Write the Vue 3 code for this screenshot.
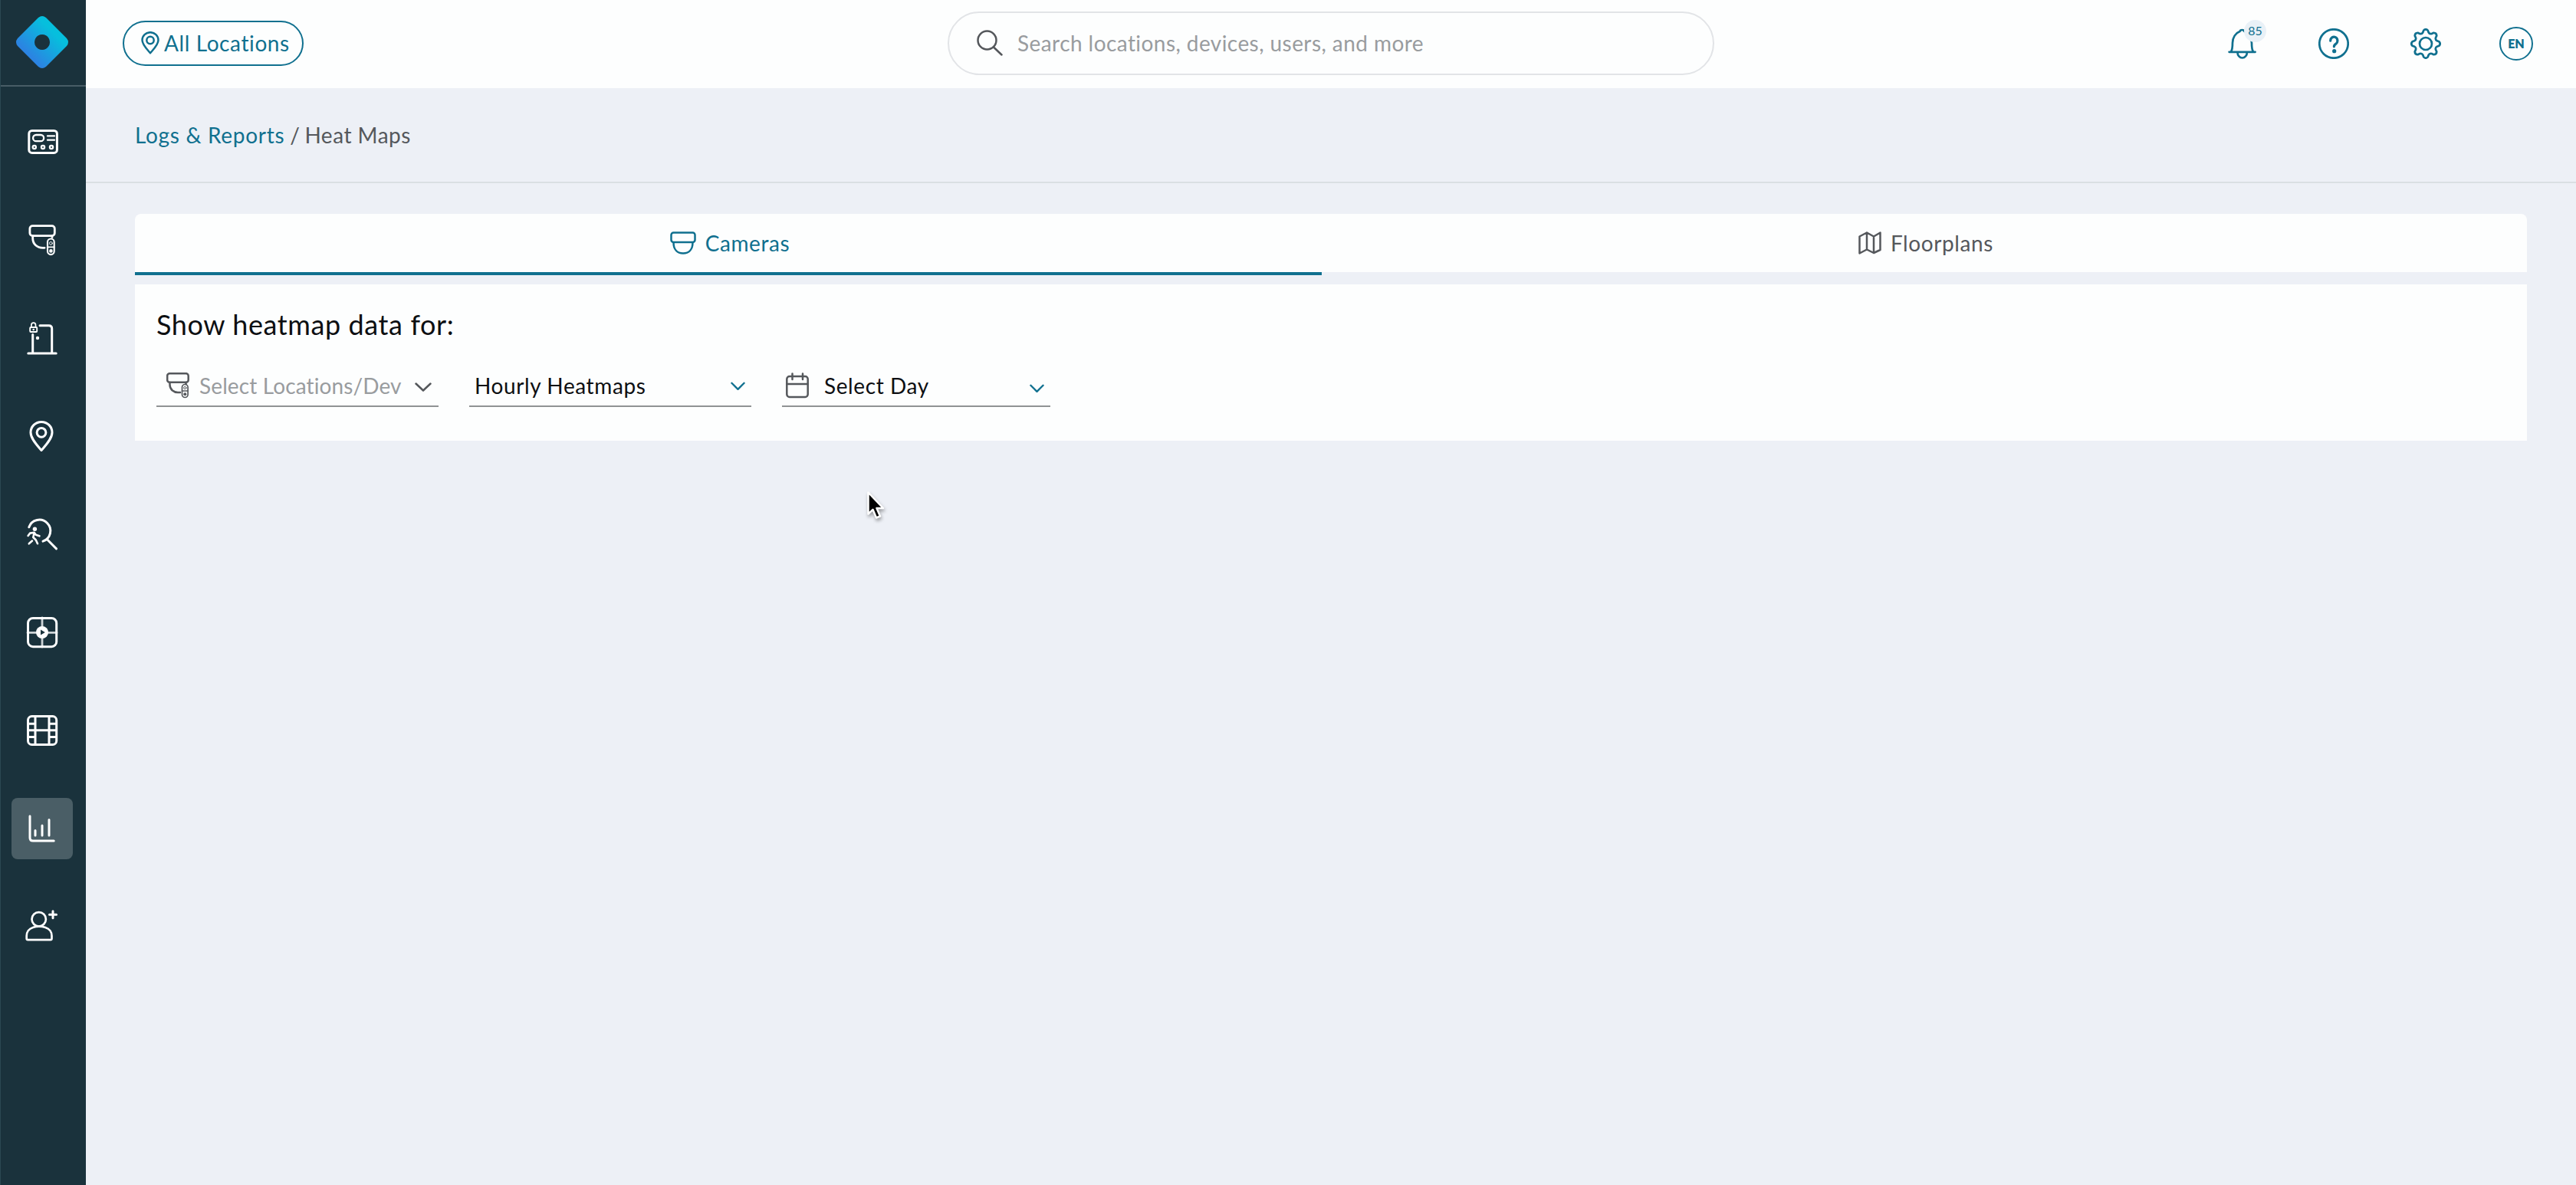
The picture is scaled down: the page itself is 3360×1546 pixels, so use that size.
<template>
  <div class="app">
    <aside class="sidebar">
      <div class="brand">
        <svg class="logo" viewBox="0 0 68 68">
          <defs>
            <linearGradient id="brand-fill" x1="0.1" y1="0.9" x2="0.9" y2="0.1">
              <stop offset="0.2" stop-color="#2b84e2" />
              <stop offset="0.75" stop-color="#06bfdd" />
            </linearGradient>
          </defs>
          <path
            fill="url(#brand-fill)"
            fill-rule="evenodd"
            d="M29 2 Q34 -2 39 2 L66 29 Q70 34 66 39 L39 66 Q34 70 29 66 L2 39 Q-2 34 2 29 Z M34 24 a10 10 0 1 0 0.01 0 Z"
          />
        </svg>
      </div>

      <nav class="menu">
        <a v-for="item in menu" :key="item" class="tile" :class="{ active: item === current }">
          <svg v-if="item === 'dashboard'" viewBox="0 0 80 80">
            <rect x="22.8" y="25.4" width="36.6" height="29" rx="4" />
            <g stroke-width="2.3">
              <rect x="28.1" y="31" width="14" height="8.2" rx="4" />
              <path d="M47 32.4h9M47 37.7h9" />
              <circle cx="29.8" cy="47" r="2.1" />
              <circle cx="41" cy="47" r="2.1" />
              <circle cx="52" cy="47" r="2.1" />
            </g>
          </svg>
          <svg v-else-if="item === 'devices'" viewBox="0 0 80 80">
            <g stroke-width="2.8">
              <rect x="23.9" y="21.6" width="32.4" height="13" rx="3.6" />
              <path d="M27.7 35v3c0 7.5 6 12.3 13 12.3h2.400M53 35v1.5" />
            </g>
            <rect x="47" y="38.5" width="8.7" height="20.600" rx="4.3" stroke-width="2.1" />
            <path d="M47 49.3h8.7" stroke-width="1.8" />
            <circle cx="51.4" cy="44.4" r="1.9" stroke-width="1" />
            <circle cx="51.4" cy="54.4" r="2.3" fill="currentColor" stroke="none" />
          </svg>
          <svg v-else-if="item === 'doors'" viewBox="0 0 80 80">
            <path d="M21.8 60h36.4M27.7 35.5V60M37 23.7h11.7q4 0 4 4V60" />
            <rect x="24.2" y="26" width="9" height="6" rx="1" stroke-width="1.9" />
            <path d="M25.9 26v-3a2.8 2.8 0 0 1 5.6 0v3" stroke-width="1.7" />
            <circle cx="28.7" cy="29" r="1.3" fill="currentColor" stroke="none" />
            <circle cx="34" cy="40" r="2.2" fill="currentColor" stroke="none" />
          </svg>
          <svg v-else-if="item === 'places'" viewBox="0 0 80 80">
            <path d="M39 58.5C33 51.5 25 43 25 35.2a14 13.8 0 0 1 28 0C53 43 45 51.5 39 58.5z" />
            <circle cx="39" cy="35.3" r="5.9" />
          </svg>
          <svg v-else-if="item === 'search'" viewBox="0 0 80 80">
            <path d="M22.8 30.8A14.4 14.4 0 1 1 41 49.2M46 46.3L58.5 58.9" />
            <circle cx="30.4" cy="33.2" r="2.7" fill="currentColor" stroke="none" />
            <path d="M21.6 42l2.6-3.4 5.4-.8 2.2 3 4.6 1.5M29.6 38.5l-1.3 5.5 3.5 3.5 2.2 4.7M27 48.6l-4.200 3.7" stroke-width="2.6" />
          </svg>
          <svg v-else-if="item === 'live'" viewBox="0 0 80 80">
            <path d="M40 21v38M21 40.4h38" stroke-width="2.8" stroke="#cdd3d6" />
            <rect x="21.5" y="21.5" width="37.2" height="37.2" rx="6.5" />
            <circle cx="40" cy="40" r="8" fill="currentColor" stroke="none" />
            <path d="M38 36.500v7l5.8-3.500z" fill="#1a323c" stroke="none" />
          </svg>
          <svg v-else-if="item === 'archive'" viewBox="0 0 80 80">
            <rect x="21.5" y="21.5" width="37.2" height="37" rx="5" />
            <path d="M31 22v36M49 22v36M31 39.8h18M22 31.2h8.5M22 39.8h8.5M22 48.5h8.5M49.5 31.2H58M49.5 39.8H58M49.5 48.5H58" />
          </svg>
          <svg v-else-if="item === 'reports'" viewBox="0 0 80 80">
            <path d="M24 23.7V52q0 4 4 4h27.2M31 42.5v6.500M40 35.9v13.100M49 28.5v20.500" />
          </svg>
          <svg v-else viewBox="0 0 80 80">
            <circle cx="35.7" cy="30.3" r="9.2" stroke-width="2.7" />
            <path d="M28 41c-5.5 1.7-8.3 6.300-8.300 11v3.6q0 1.6 1.6 1.6h29.600q1.6 0 1.6-1.6V52c0-4.700-2.8-9.300-8.300-11-5-1.6-11.5-1.6-16.200 0z" stroke-width="2.7" />
            <path d="M54 19.8v9M49.5 24.3h9" />
          </svg>
        </a>
      </nav>
    </aside>

    <div class="page">
      <header class="topbar">
        <button class="location-btn">
          <svg class="pin" viewBox="0 0 24 30">
            <path d="M12 28.2C8 23.5 1.5 17.5 1.5 11.3a10.5 10.1 0 0 1 21 0C22.5 17.5 16 23.5 12 28.2z" />
            <circle cx="12" cy="11.5" r="4.7" />
          </svg>
          <span>All Locations</span>
        </button>

        <div class="search">
          <svg class="search-icon" viewBox="0 0 34 34">
            <circle cx="13.5" cy="13.5" r="12" />
            <path d="M22 22.5l10.500 10" />
          </svg>
          <span>Search locations, devices, users, and more</span>
        </div>

        <div class="actions">
          <div class="bell">
            <svg viewBox="0 0 40 40">
              <path d="M1.6 30.8h34M4 30.500c2-3 2-6.500 2-11.500 0-7 4-13 9.500-15l1-1.500q2-1 4 0l1 1.500c5.500 2 9.500 8 9.500 15 0 5 0 8.500 2 11.500M12.500 31.500a6.200 7 0 0 0 12.400 0" />
            </svg>
            <span class="badge">85</span>
          </div>
          <svg class="help" viewBox="0 0 40 40">
            <circle cx="20" cy="20" r="18.7" />
            <path d="M15.7 16.2a4.6 5 0 1 1 7.3 3.9q-2.6 1.6-2.6 3.7" stroke-width="3.2" />
            <circle cx="20.7" cy="29.7" r="2.6" fill="currentColor" stroke="none" />
          </svg>
          <svg class="gear" viewBox="0 0 40 40">
            <path :d="gearPath" />
            <circle cx="20" cy="20" r="8" />
          </svg>
          <div class="lang">EN</div>
        </div>
      </header>

      <div class="breadcrumb">
        <a>Logs &amp; Reports</a><span class="sep">/</span><span>Heat Maps</span>
      </div>

      <main class="content">
        <div class="tabs">
          <div class="tab selected">
            <svg class="tab-icon" viewBox="0 0 34 30">
              <rect x="1.5" y="1.5" width="31" height="12.5" rx="3" />
              <path d="M4.5 14.5c0 9 5 14 12.5 14s12.5-5 12.5-14" />
            </svg>
            <span>Cameras</span>
          </div>
          <div class="tab plans">
            <svg class="tab-icon map" viewBox="0 0 30 30">
              <path d="M1.5 6.5L11 1.5l9 5 8.500-5v22.500L20 28l-9-4.500-9.500 5zM11 1.5v22M20 6.5V28" />
            </svg>
            <span>Floorplans</span>
          </div>
        </div>

        <section class="panel">
          <h2>Show heatmap data for:</h2>
          <div class="filters">
            <div class="select devices">
              <svg class="device-icon" viewBox="0 0 30 34">
                <rect x="1.2" y="1.2" width="27.5" height="11.5" rx="3" />
                <path d="M4.5 13v3c0 6 5 10 10.5 10H18M25.5 13v2" />
                <rect x="20.5" y="15.5" width="7.6" height="17" rx="3.8" stroke-width="1.7" />
                <path d="M20.5 24h7.6" stroke-width="1.5" />
                <circle cx="24.3" cy="20" r="1.6" stroke-width="1" />
                <circle cx="24.3" cy="28.3" r="2" fill="currentColor" stroke="none" />
              </svg>
              <span class="value">Select Locations/Dev</span>
              <svg class="chevron" viewBox="0 0 22 12"><path d="M1.5 1.5L11 10.5l9.500-9" /></svg>
            </div>
            <div class="select range">
              <span class="value">Hourly Heatmaps</span>
              <svg class="chevron" viewBox="0 0 20 12"><path d="M1.5 1.5L10 10l8.500-8.500" /></svg>
            </div>
            <div class="select day">
              <svg class="calendar" viewBox="0 0 30 34">
                <rect x="1.3" y="5" width="27.4" height="27" rx="3.5" />
                <path d="M1.3 15h27.400M8.5 1.5v7.500M22 1.5v7.500" />
              </svg>
              <span class="value">Select Day</span>
              <svg class="chevron" viewBox="0 0 20 12"><path d="M1.5 1.5L10 10l8.500-8.500" /></svg>
            </div>
          </div>
        </section>
      </main>
    </div>

    <svg class="cursor" viewBox="0 0 24 38">
      <path d="M2.5 2.5v28l6-5.7 4.5 10.7 5-2-4.500-10.500h8.500z" />
    </svg>
  </div>
</template>

<script setup>
const menu = ['dashboard', 'devices', 'doors', 'places', 'search', 'live', 'archive', 'reports', 'users']
const current = 'reports'

// eight rounded teeth around the centre of a 40x40 box
const point = (r, deg) => {
  const a = (deg * Math.PI) / 180
  return `${(20 + r * Math.cos(a)).toFixed(2)} ${(20 + r * Math.sin(a)).toFixed(2)}`
}
const gearPath =
  Array.from({ length: 8 }, (_, i) => {
    const d = i * 45
    return `${i ? 'L' : 'M'}${point(15.2, d - 14)} L${point(17.6, d - 9)} Q${point(20, d)} ${point(17.6, d + 9)} L${point(15.2, d + 14)} Q${point(13.2, d + 22.5)} ${point(15.2, d + 31)}`
  }).join(' ') + 'Z'
</script>

<style>
body {
  background: #edf0f6;
}
</style>

<style scoped>
.app {
  display: flex;
  height: 1546px;
  background: #edf0f6;
  color: #55585c;
  font-family: Lato, 'Noto Sans', sans-serif;
  font-size: 28px;
  line-height: 34px;
  letter-spacing: 0.6px;
  white-space: nowrap;
  overflow: hidden;
}
svg {
  display: block;
  flex: none;
  fill: none;
  stroke: currentColor;
  stroke-width: 2.5;
  stroke-linecap: round;
  stroke-linejoin: round;
}

.sidebar {
  flex: none;
  box-sizing: border-box;
  width: 112px;
  border-left: 1px solid #2b4852;
  background: #1a323c;
  color: #fff;
}
.brand {
  box-sizing: border-box;
  height: 113px;
  padding: 21px 0 0 20px;
  border-bottom: 2px solid #485d66;
}
.logo { width: 68px; height: 68px; stroke: none; }
.menu {
  display: flex;
  flex-direction: column;
  gap: 48px;
  padding: 32px 0 0 14px;
}
.tile { width: 80px; height: 80px; border-radius: 8px; }
.tile.active { background: #4a5e66; }
.tile svg { width: 80px; height: 80px; stroke-width: 3; }

.page { flex: 1; min-width: 0; }
.topbar {
  box-sizing: border-box;
  display: flex;
  align-items: center;
  height: 115px;
  padding: 0 56px 2px 48px;
  background: #fdfefe;
}
.location-btn {
  box-sizing: border-box;
  display: flex;
  gap: 6px;
  width: 236px;
  height: 59px;
  padding: 10px 0 0 22px;
  border: 2px solid #10708f;
  border-radius: 30px;
  background: none;
  color: #10708f;
  font: inherit;
  letter-spacing: inherit;
}
.pin { width: 24px; height: 30px; margin-top: 2px; }
.search {
  box-sizing: border-box;
  display: flex;
  align-items: center;
  gap: 19px;
  width: 1000px;
  height: 83px;
  margin-left: 840px;
  padding: 0 0 2px 36px;
  border: 2px solid #e2e4e7;
  border-radius: 42px;
  color: #999c9f;
  letter-spacing: 0.43px;
}
.search-icon { width: 34px; height: 34px; color: #54575b; }
.actions {
  display: flex;
  align-items: center;
  margin-left: auto;
  color: #10708f;
}
.actions svg { width: 40px; height: 40px; stroke-width: 2.7; }
.bell { position: relative; margin-right: 78px; }
.badge {
  position: absolute;
  top: -11px;
  left: 21px;
  width: 29px;
  height: 29px;
  border-radius: 50%;
  background: #e9f1f7;
  font-size: 16px;
  line-height: 28px;
  letter-spacing: 0;
  text-align: center;
}
.actions .help { margin-right: 80px; }
.actions .gear { margin-right: 76px; }
.lang {
  box-sizing: border-box;
  width: 44px;
  height: 44px;
  border: 2.5px solid #10708f;
  border-radius: 50%;
  font-size: 16px;
  font-weight: 800;
  line-height: 40px;
  letter-spacing: 0;
  text-align: center;
}

.breadcrumb {
  box-sizing: border-box;
  display: flex;
  height: 124px;
  padding: 44px 64px 0;
  border-bottom: 2px solid #dadfe3;
  letter-spacing: 0.5px;
}
.breadcrumb a { color: #10708f; letter-spacing: 0.7px; }
.sep { margin: 0 6px 0 7px; }

.content { padding: 40px 64px 0; }
.tabs { display: flex; height: 80px; }
.tab {
  box-sizing: border-box;
  display: flex;
  justify-content: center;
  gap: 12px;
  width: 1548px;
  height: 76px;
  padding-top: 21px;
  padding-left: 4px;
  border-radius: 8px 0 0 0;
  background: #fdfefe;
}
.tab.selected {
  height: 80px;
  border-bottom: 4px solid #10708f;
  color: #10708f;
}
.tab.plans { flex: 1; border-radius: 0 8px 0 0; }
.tab-icon { width: 34px; height: 30px; margin-top: 2px; }
.tab-icon.map { width: 30px; }

.panel {
  box-sizing: border-box;
  height: 204px;
  margin-top: 12px;
  padding: 30px 28px 0;
  background: #fdfefe;
}
h2 {
  margin: 0;
  color: #0d0f12;
  font-size: 36px;
  font-weight: 400;
  line-height: 44px;
}
.filters { display: flex; margin-top: 34px; }
.select {
  box-sizing: border-box;
  display: flex;
  align-items: flex-start;
  height: 52px;
  padding-top: 7px;
  border-bottom: 2px solid #909394;
}
.select .value { color: #0d0f12; }
.select .chevron { width: 19px; height: 12px; margin: 12px 0 0 auto; color: #10708f; }
.select.devices { width: 368px; margin-right: 40px; padding-left: 13px; padding-right: 9px; }
.select.devices .value { margin-left: 13px; color: #999c9f; letter-spacing: 0.12px; }
.select.devices .chevron { width: 22px; margin-top: 13px; color: #54575b; }
.device-icon, .calendar { width: 30px; height: 34px; }
.select.range { width: 368px; margin-right: 40px; padding-left: 7px; padding-right: 8px; }
.select.day { width: 350px; padding-left: 5px; padding-right: 8px; }
.select.day .value { margin-left: 20px; }
.select.day .chevron { margin-top: 15px; }

/* mouse pointer floating above the page */
.cursor {
  position: absolute;
  top: 640px;
  left: 1130px;
  width: 24px;
  height: 38px;
  fill: #000;
  stroke: #fff;
  stroke-width: 2.5;
  filter: drop-shadow(1px 3px 2px rgba(0, 0, 0, 0.35));
}
</style>
